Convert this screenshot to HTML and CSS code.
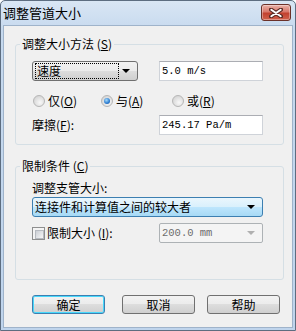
FILE: index.html
```html
<!DOCTYPE html>
<html lang="zh">
<head>
  <meta charset="UTF-8">
  <title>调整管道大小</title>
  <link rel="stylesheet" href="styles.css">
</head>
<body>
  <div class="window">
    <div class="titlebar">
      <span class="title">调整管道大小</span>
      <button class="close" aria-label="关闭">
        <svg width="14" height="10" viewBox="0 0 14 10">
          <path d="M2 1.5 L12 8.5 M12 1.5 L2 8.5" stroke="#5a2a24" stroke-width="4" stroke-linecap="round"/>
          <path d="M2.3 1.7 L11.7 8.3 M11.7 1.7 L2.3 8.3" stroke="#fff" stroke-width="2" stroke-linecap="round"/>
        </svg>
      </button>
    </div>

    <div class="client">
      <fieldset class="group g1">
        <legend>调整大小方法 (<u>S</u>)</legend>
        <div class="body">
          <div class="row">
            <div class="combo small">
              <span class="focus">速度</span>
              <span class="arrow"></span>
            </div>
            <div class="input">5.0 m/s</div>
          </div>
          <div class="radios">
            <label class="opt o1"><span class="radio"></span>仅(<u>O</u>)</label>
            <label class="opt o2"><span class="radio on"></span>与(<u>A</u>)</label>
            <label class="opt"><span class="radio"></span>或(<u>R</u>)</label>
          </div>
          <div class="row r3">
            <span class="text">摩擦(<u>F</u>):</span>
            <div class="input">245.17 Pa/m</div>
          </div>
        </div>
      </fieldset>

      <fieldset class="group g2">
        <legend>限制条件 (<u>C</u>)</legend>
        <div class="body">
          <div class="text caption">调整支管大小:</div>
          <div class="combo hot">
            <span class="val">连接件和计算值之间的较大者</span>
            <span class="arrow"></span>
          </div>
          <div class="row r-limit">
            <label class="text check-label"><span class="check"></span>限制大小 (<u>I</u>):</label>
            <div class="combo-edit disabled">
              <span class="val">200.0 mm</span>
              <span class="arrow"></span>
            </div>
          </div>
        </div>
      </fieldset>

      <div class="buttons">
        <button class="btn default">确定</button>
        <button class="btn cancel">取消</button>
        <button class="btn">帮助</button>
      </div>
    </div>
  </div>
</body>
</html>
```

FILE: styles.css
```css
* { box-sizing: border-box; }
body { margin: 0; background: #fff; font-family: "Noto Sans CJK SC", "Liberation Sans", sans-serif; font-size: 12px; color: #000; }
u { text-decoration: underline; text-underline-offset: 1px; }

.window {
  width: 296px; height: 331px;
  border: 1px solid #5d6d80;
  border-radius: 5px 5px 0 0;
  background: linear-gradient(#d9e6f4, #c6d9ee 30px, #bfd4ec);
  display: flex; flex-direction: column;
}

/* 标题栏 */
.titlebar { height: 24px; display: flex; justify-content: space-between; align-items: flex-start; padding-left: 2px; }
.title { font-size: 13px; line-height: 24px; color: #000; }
.close {
  width: 30px; height: 17px; margin: 3px 4px 0 0; padding: 0;
  border: 1px solid #6b3129; border-radius: 3px;
  background: linear-gradient(#eab2a8, #d8786b 45%, #c2412f 55%, #d0614c);
  box-shadow: inset 0 0 0 1px rgba(255,255,255,.35);
  display: flex; align-items: center; justify-content: center;
}

.client {
  flex: 1; margin: 0 2px 2px 2px;
  background: #f0f0f0;
  border: 1px solid #9fb3ca;
}

/* 分组框 */
.group { margin: 11px 8px 0 11px; padding: 0; border: 1px solid #d5dfe5; border-radius: 3px; min-width: 0; }
.group legend { margin-left: 4px; padding: 0 2px; line-height: 14px; }
.g2 { margin-top: 14px; }
.g1 .body { padding: 10px 0 9px 16px; }
.g2 .body { padding: 8px 0 36px 16px; }

.row { display: grid; grid-template-columns: 127px 104px; align-items: center; height: 20px; }
.r3 { margin-top: 4px; }
.text { line-height: 14px; }
.r-limit { margin-top: 6px; }

/* 文本框 */
.input {
  width: 104px; height: 20px;
  background: #fff;
  border: 1px solid #cfd3d9; border-top-color: #abadb3;
  font-family: "Liberation Mono", monospace; font-size: 10.5px; line-height: 18px; padding-left: 2px;
}

/* 下拉框 */
.combo {
  height: 20px;
  border: 1px solid #707070; border-radius: 3px;
  background: linear-gradient(#f2f2f2, #ebebeb 50%, #dddddd 50%, #cfcfcf);
  display: flex; align-items: center;
}
.combo.small { width: 106px; }
.combo .focus { margin-left: 2px; width: 84px; height: 16px; line-height: 14px; border: 1px dotted #000; padding-left: 1px; }
.combo .val { padding-left: 2px; line-height: 16px; }
.arrow {
  margin-left: auto; margin-right: 7px;
  width: 0; height: 0;
  border-left: 4px solid transparent; border-right: 4px solid transparent; border-top: 4px solid #000;
}
.combo.hot {
  width: 231px; margin-top: 2px;
  border-color: #3c7fb1;
  background: linear-gradient(#eaf6fd, #d9f0fc 50%, #bee6fd 50%, #a7d9f5);
}

.combo-edit {
  width: 104px; height: 20px;
  border: 1px solid #adb2b5; border-radius: 2px;
  display: flex; align-items: center;
}
.combo-edit.disabled { background: #f4f4f4; color: #6d6d6d; }
.combo-edit .val { font-family: "Liberation Mono", monospace; font-size: 10.5px; padding-left: 2px; }
.combo-edit .arrow { border-top-color: #b0b0b0; margin-right: 7px; }

/* 单选与复选 */
.radios { display: flex; align-items: center; height: 20px; margin-top: 10px; padding-left: 1px; }
.opt { display: flex; align-items: center; line-height: 14px; }
.o1 { width: 68px; }
.o2 { width: 71px; }
.radio {
  width: 12px; height: 12px; margin-right: 3px; flex: none;
  border: 1px solid #b6b6b6; border-radius: 50%;
  background: radial-gradient(circle at 60% 65%, #f8f8f8, #d4d4d4 80%);
  display: flex; align-items: center; justify-content: center;
}
.radio.on::after {
  content: ""; width: 6px; height: 6px; border-radius: 50%;
  background: radial-gradient(circle at 40% 35%, #a8dcfb, #2a7bd0 60%, #1a4e90);
}
.check-label { display: flex; align-items: center; }
.check {
  width: 13px; height: 13px; margin-right: 2px; flex: none;
  border: 1px solid #8e8f8f;
  padding: 2px;
  background: #f4f4f4;
}
.check::before { content: ""; display: block; width: 100%; height: 100%; border: 1px solid #b6bac0; background: linear-gradient(135deg, #cbcfd5, #f6f6f6); }

/* 按钮 */
.buttons { display: flex; margin-top: 15px; padding-left: 28px; }
.btn {
  width: 73px; height: 19px; padding: 0;
  font-family: "Noto Sans CJK SC", sans-serif; font-size: 12px; line-height: 15px;
  border: 1px solid #707070; border-radius: 3px;
  background: linear-gradient(#f2f2f2, #ebebeb 50%, #dddddd 50%, #cfcfcf);
}
.btn.default { border-color: #3c7fb1; box-shadow: inset 0 0 0 1px #48d8fb; margin-right: 17px; }
.btn.cancel { margin-right: 12px; }
```
